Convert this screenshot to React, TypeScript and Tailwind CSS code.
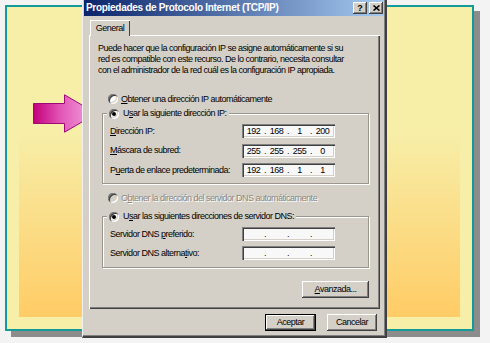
import React from "react";

const Radio = ({ checked = false, disabled = false }: { checked?: boolean; disabled?: boolean }) => (
  <span
    className={`relative inline-block w-[10px] h-[10px] rounded-full shrink-0 ${disabled ? "bg-[#d4d0c8]" : "bg-white"} shadow-[inset_1px_1px_0_#808080,inset_2px_2px_0_#404040,inset_-1px_-1px_0_#ffffff,inset_-2px_-2px_0_#d4d0c8]`}
  >
    {checked && <span className="absolute left-[3px] top-[3px] w-[4px] h-[4px] rounded-full bg-black" />}
  </span>
);

const IpField = ({ octets }: { octets: string[] }) => (
  <div className="w-[93px] h-[14px] bg-[#f8f8f8] shadow-[inset_1px_1px_0_#808080,inset_2px_2px_0_#404040,inset_-1px_-1px_0_#ffffff,inset_-2px_-2px_0_#d4d0c8] flex items-center pl-[2px] leading-[14px]">
    {octets.map((o, i) => (
      <React.Fragment key={i}>
        <span className="w-[19px] text-center">{o}</span>
        {i < 3 && <span className="w-[4px] text-center">.</span>}
      </React.Fragment>
    ))}
  </div>
);

const Row = ({ label, octets }: { label: React.ReactNode; octets: string[] }) => (
  <div className="flex items-center h-[14px]">
    <span className="flex-1 leading-[11px]">{label}</span>
    <IpField octets={octets} />
  </div>
);

const Btn = ({ children, def = false, w }: { children: React.ReactNode; def?: boolean; w: string }) => (
  <div
    className={`${w} h-[17px] flex items-center justify-center bg-[#d4d0c8] ${def ? "border border-black shadow-[inset_-1px_-1px_0_#404040,inset_1px_1px_0_#ffffff,inset_-2px_-2px_0_#808080]" : "shadow-[inset_-1px_-1px_0_#404040,inset_1px_1px_0_#ffffff,inset_-2px_-2px_0_#808080]"}`}
  >
    {children}
  </div>
);

export default function App() {
  return (
    <div className="relative w-[490px] h-[343px] overflow-hidden bg-[#f3f3f3]">
      {/* slide card */}
      <div className="ml-[5px] mt-[5px] w-[469px] h-[326px] border-2 border-[#119c9a] bg-[#f7eea8] shadow-[6px_6px_0_0_#8c8c8c] p-[12px]">
        <div className="w-full h-full bg-[linear-gradient(to_bottom,#f7eea8_38%,#ffcc66_100%)]" />
      </div>

      {/* arrow */}
      <svg className="absolute left-[33px] top-[94px]" width="65" height="41" viewBox="0 0 65 41">
        <defs>
          <linearGradient id="ag" x1="0" x2="1" y1="0" y2="0">
            <stop offset="0" stopColor="#c4007c" />
            <stop offset="0.45" stopColor="#e25ab8" />
            <stop offset="1" stopColor="#f7a8e0" />
          </linearGradient>
        </defs>
        <path d="M0.5 9.5 H31.5 V0.8 L63.5 19.5 L31.5 38.2 V29.5 H0.5 Z" fill="url(#ag)" stroke="#9c0a78" strokeWidth="1" />
      </svg>

      {/* dialog */}
      <div className="absolute left-[82px] top-0 w-[305px] h-[338px] bg-[#d4d0c8] border-l border-l-[#f0f0f0] border-r-2 border-r-[#404040] border-b-2 border-b-[#404040] shadow-[inset_-1px_-1px_0_#808080] px-[1px] font-['Liberation_Sans',Arial,sans-serif] text-[9px] tracking-[-0.5px] text-black">
        {/* title bar */}
        <div className="h-[16px] flex items-center justify-between bg-[linear-gradient(to_right,#0a246a,#a6caf0)] pl-[2px] pr-[1px]">
          <span className="text-white font-bold text-[10px] tracking-[-0.3px] leading-[16px]">
            Propiedades de Protocolo Internet (TCP/IP)
          </span>
          <div className="flex gap-[2px]">
            <div className="w-[14px] h-[12px] bg-[#d4d0c8] shadow-[inset_-1px_-1px_0_#404040,inset_1px_1px_0_#ffffff,inset_-2px_-2px_0_#808080] flex items-center justify-center font-bold text-[9px] leading-none tracking-normal">
              ?
            </div>
            <div className="w-[14px] h-[12px] bg-[#d4d0c8] shadow-[inset_-1px_-1px_0_#404040,inset_1px_1px_0_#ffffff,inset_-2px_-2px_0_#808080] flex items-center justify-center">
              <svg width="7" height="6" viewBox="0 0 7 6">
                <path d="M0.5 0.5 L6.5 5.5 M6.5 0.5 L0.5 5.5" stroke="#000" strokeWidth="1.6" />
              </svg>
            </div>
          </div>
        </div>

        {/* tab */}
        <div className="mt-[4px] pl-[6px] flex">
          <div className="relative z-10 -mb-[1px] w-[40px] h-[16px] bg-[#d4d0c8] shadow-[inset_1px_1px_0_#ffffff,inset_-1px_0_0_#404040] flex items-center justify-center leading-none">
            General
          </div>
        </div>

        {/* panel */}
        <div className="ml-[5px] w-[291px] h-[274px] shadow-[inset_1px_1px_0_#ffffff,inset_-1px_-1px_0_#404040,inset_-2px_-2px_0_#808080] pt-[8px] flex flex-col">
          <p className="pl-[9px] leading-[11px]">
            Puede hacer que la configuración IP se asigne automáticamente si su
            <br />
            red es compatible con este recurso. De lo contrario, necesita consultar
            <br />
            con el administrador de la red cuál es la configuración IP apropiada.
          </p>

          <div className="mt-[17.5px] pl-[19px] h-[11px] flex items-center gap-[3px] leading-[11px]">
            <Radio />
            <span>
              <u>O</u>btener una dirección IP automáticamente
            </span>
          </div>

          <div className="relative mt-[8.5px] ml-[13px] w-[267px] h-[71px] border border-[#9a968e] shadow-[inset_1px_1px_0_#ffffff,1px_1px_0_#ffffff] pt-[10px] pl-[7px] pr-[33px] flex flex-col gap-[5.5px]">
            <div className="absolute left-[4px] -top-[6px] h-[11px] px-[2px] bg-[#d4d0c8] flex items-center gap-[4px] leading-[11px]">
              <Radio checked />
              <span>
                U<u>s</u>ar la siguiente dirección IP:
              </span>
            </div>
            <Row label={<><u>D</u>irección IP:</>} octets={["192", "168", "1", "200"]} />
            <Row label={<><u>M</u>áscara de subred:</>} octets={["255", "255", "255", "0"]} />
            <Row label={<>P<u>u</u>erta de enlace predeterminada:</>} octets={["192", "168", "1", "1"]} />
          </div>

          <div className="mt-[8.5px] pl-[19px] h-[11px] flex items-center gap-[3px] leading-[11px] text-[#8a8782] [text-shadow:1px_1px_0_#ffffff]">
            <Radio disabled />
            <span>
              O<u>b</u>tener la dirección del servidor DNS automáticamente
            </span>
          </div>

          <div className="relative mt-[12.5px] ml-[13px] w-[267px] h-[52px] border border-[#9a968e] shadow-[inset_1px_1px_0_#ffffff,1px_1px_0_#ffffff] pt-[10px] pl-[7px] pr-[33px] flex flex-col gap-[5px]">
            <div className="absolute left-[4px] -top-[6px] h-[11px] px-[2px] bg-[#d4d0c8] flex items-center gap-[4px] leading-[11px]">
              <Radio checked />
              <span>
                U<u>s</u>ar las siguientes direcciones de servidor DNS:
              </span>
            </div>
            <Row label={<>Servidor DNS <u>p</u>referido:</>} octets={["", "", "", ""]} />
            <Row label={<>Servidor DNS alterna<u>t</u>ivo:</>} octets={["", "", "", ""]} />
          </div>

          <div className="mt-[13px] pr-[11px] flex justify-end">
            <Btn w="w-[67px]">
              <span>
                <u>A</u>vanzada...
              </span>
            </Btn>
          </div>
        </div>

        {/* bottom buttons */}
        <div className="mt-[5px] pr-[7px] flex justify-end gap-[11px]">
          <Btn w="w-[51px]" def>
            Aceptar
          </Btn>
          <Btn w="w-[50px]">Cancelar</Btn>
        </div>
      </div>
    </div>
  );
}
